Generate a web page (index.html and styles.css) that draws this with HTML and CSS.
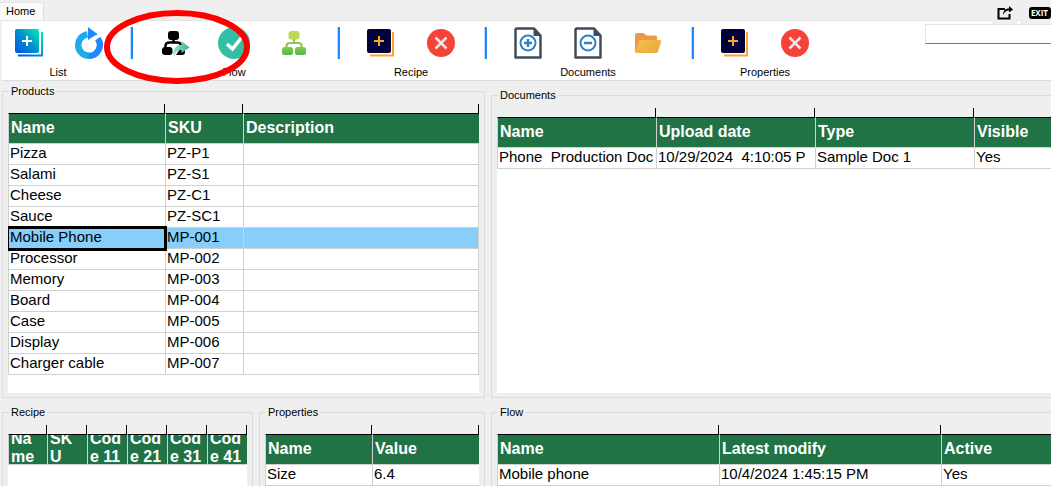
FILE: index.html
```html
<!DOCTYPE html>
<html lang="en">
<head>
<meta charset="utf-8">
<title>Products</title>
<link rel="stylesheet" href="styles.css">
</head>
<body>
<svg class="defs" width="0" height="0" aria-hidden="true">
  <defs>
    <linearGradient id="teal" x1="0" y1="1" x2="1" y2="0"><stop offset="0" stop-color="#0055dc"/><stop offset=".5" stop-color="#008fd0"/><stop offset="1" stop-color="#00f0b4"/></linearGradient>
    <linearGradient id="green" x1="0" y1="0" x2="0" y2="1"><stop offset="0" stop-color="#8cc850"/><stop offset="1" stop-color="#50b748"/></linearGradient>
    <linearGradient id="mint" x1="0" y1="0" x2="1" y2="0"><stop offset="0" stop-color="#8ce8cf"/><stop offset="1" stop-color="#3fae9c"/></linearGradient>
    <linearGradient id="fold" x1="0" y1="0" x2="1" y2="1"><stop offset="0" stop-color="#f0c248"/><stop offset="1" stop-color="#eda63c"/></linearGradient>
    <symbol id="add-dark" viewBox="0 0 32 32">
      <path d="M28 5v23.500H5" fill="none" stroke="#ffa42b" stroke-width="2"/>
      <rect x="2" y="2" width="24" height="24" rx="2" fill="#02023a"/>
      <path d="M14 9v10M9 14h10" stroke="#ffa42b" stroke-width="2"/>
    </symbol>
    <symbol id="cancel" viewBox="0 0 32 32">
      <circle cx="16" cy="16" r="14" fill="#f6433a"/>
      <path d="M10.500 10.500l11 11M21.500 10.500l-11 11" stroke="#f3e6e6" stroke-width="2.500"/>
    </symbol>
    <symbol id="page" viewBox="0 0 32 32">
      <path d="M4.500 1.500H22l6.500 7V30.500H3.500V2.500z" fill="#fff" stroke="#414b59" stroke-width="2.500" stroke-linejoin="round"/>
      <path d="M21.500 1v8H29z" fill="#414b59"/>
      <circle cx="16" cy="16" r="7.500" fill="none" stroke="#2f80c8" stroke-width="2"/>
    </symbol>
  </defs>
</svg>

<header class="strip">
  <button class="tab" type="button">Home</button>
  <div class="window-actions">
    <button class="action" type="button" aria-label="Share">
      <svg width="16" height="14" viewBox="0 0 16 14"><path d="M8 3H1.500v9.500h11V8" fill="none" stroke="#000" stroke-width="2"/><path d="M6 9c0-4 2-6.500 6-6.500V0l4 3.500-4 3V4.500C9 4.500 7.500 6 6 9z"/></svg>
    </button>
    <button class="action action-exit" type="button" aria-label="Exit"><span class="exit">EXIT</span></button>
  </div>
</header>

<div class="toolbar">
  <section class="group group-first">
    <div class="tools">
      <button class="tool" type="button" aria-label="Add product">
        <svg viewBox="0 0 32 32"><path d="M30 5v23.500H6" fill="none" stroke="url(#teal)" stroke-width="2"/><rect x="3" y="2" width="24" height="24" rx="2" fill="url(#teal)"/><path d="M15 9v10M10 14h10" stroke="#fff" stroke-width="2"/></svg>
      </button>
      <button class="tool" type="button" aria-label="Refresh">
        <svg viewBox="0 0 32 32"><path d="M15.500 7.300a10.800 10.800 0 0 0 1.500 21.500" fill="none" stroke="#1fa9ea" stroke-width="6.400"/><path d="M17 28.800a10.800 10.800 0 0 0 8.700-17.200" fill="none" stroke="#1e88ff" stroke-width="6.400"/><path d="M16 0l10 7.500-3 1L16 13z" fill="#1e88ff"/></svg>
      </button>
    </div>
    <span class="group-name">List</span>
  </section>
  <i class="sep"></i>
  <section class="group group-flow">
    <div class="tools">
      <button class="tool" type="button" aria-label="Export flow">
        <svg viewBox="-1 0 32 32"><rect x="9" y="4" width="11" height="9" rx="3"/><path d="M14.500 12v4M6.500 22v-3q0-3.500 4-3.500h8q3 0 3.500 3" fill="none" stroke="#000" stroke-width="2.500"/><rect x="3" y="20" width="10.500" height="8" rx="3"/><path d="M17 28l4-6 5 1v2q0 3-3 3z"/><path d="M14.500 29.500c-1-8 3-11.500 8-11.500v-4l8 6.500-8 5.500v-3c-4 0-6 2-8 6.500z" fill="url(#mint)"/></svg>
      </button>
      <button class="tool" type="button" aria-label="Approve flow">
        <svg viewBox="0 0 32 32"><circle cx="16" cy="16" r="16" fill="#34bea6"/><path d="M9 17l5.500 5L24 10" fill="none" stroke="#fff" stroke-width="3.500"/></svg>
      </button>
      <button class="tool" type="button" aria-label="Flow chart">
        <svg viewBox="0 0 32 32" fill="url(#green)"><rect x="10.500" y="4" width="11" height="8.500" rx="2.500" fill="#bcd858"/><path d="M16 12v4M8.500 21v-2q0-3 3-3h9q3 0 3 3v2" fill="none" stroke="#8cc850" stroke-width="2.200"/><rect x="4" y="20" width="11" height="8" rx="2.500"/><rect x="17" y="20" width="11" height="8" rx="2.500"/></svg>
      </button>
    </div>
    <span class="group-name">Flow</span>
    <svg class="marker" width="148" height="76" viewBox="0 0 148 76" aria-hidden="true"><ellipse cx="74" cy="38" rx="70" ry="34" fill="none" stroke="#f00" stroke-width="6"/></svg>
  </section>
  <i class="sep"></i>
  <section class="group">
    <div class="tools">
      <button class="tool" type="button" aria-label="Add recipe"><svg><use href="#add-dark"/></svg></button>
      <button class="tool" type="button" aria-label="Remove recipe"><svg><use href="#cancel"/></svg></button>
    </div>
    <span class="group-name">Recipe</span>
  </section>
  <i class="sep"></i>
  <section class="group">
    <div class="tools">
      <button class="tool" type="button" aria-label="Add document"><svg viewBox="0 0 32 32"><use href="#page"/><path d="M16 12v8M12 16h8" stroke="#2f80c8" stroke-width="2.500"/></svg></button>
      <button class="tool" type="button" aria-label="Remove document"><svg viewBox="0 0 32 32"><use href="#page"/><path d="M12 16h8" stroke="#2f80c8" stroke-width="2.500"/></svg></button>
      <button class="tool" type="button" aria-label="Open document">
        <svg viewBox="0 0 32 32"><path d="M3 25V8q0-2 2-2h6q2 0 3 2.500h9q2 0 2 2V15L5 26z" fill="#e9994b"/><path d="M8 13h20q1.500 0 1 2l-3 9.500q-.5 1.500-2 1.500H5q-2 0-1.500-2l3-9.500Q7 13 8 13z" fill="url(#fold)"/></svg>
      </button>
    </div>
    <span class="group-name">Documents</span>
  </section>
  <i class="sep"></i>
  <section class="group">
    <div class="tools">
      <button class="tool" type="button" aria-label="Add property"><svg><use href="#add-dark"/></svg></button>
      <button class="tool" type="button" aria-label="Remove property"><svg><use href="#cancel"/></svg></button>
    </div>
    <span class="group-name">Properties</span>
  </section>
  <input class="search" type="text" aria-label="Search">
</div>

<main class="panels">
  <fieldset class="panel">
    <legend>Products</legend>
    <div class="sheet sheet-products">
      <table class="closed">
        <colgroup><col class="w157"><col class="w78"><col></colgroup>
        <thead>
          <tr class="ticks" aria-hidden="true"><td></td><td></td><td></td></tr>
          <tr><th>Name</th><th>SKU</th><th>Description</th></tr>
        </thead>
        <tbody>
          <tr><td>Pizza</td><td>PZ-P1</td><td></td></tr>
          <tr><td>Salami</td><td>PZ-S1</td><td></td></tr>
          <tr><td>Cheese</td><td>PZ-C1</td><td></td></tr>
          <tr><td>Sauce</td><td>PZ-SC1</td><td></td></tr>
          <tr class="selected"><td class="current">Mobile Phone</td><td>MP-001</td><td></td></tr>
          <tr><td>Processor</td><td>MP-002</td><td></td></tr>
          <tr><td>Memory</td><td>MP-003</td><td></td></tr>
          <tr><td>Board</td><td>MP-004</td><td></td></tr>
          <tr><td>Case</td><td>MP-005</td><td></td></tr>
          <tr><td>Display</td><td>MP-006</td><td></td></tr>
          <tr><td>Charger cable</td><td>MP-007</td><td></td></tr>
        </tbody>
      </table>
    </div>
  </fieldset>

  <fieldset class="panel panel-open panel-documents">
    <legend>Documents</legend>
    <div class="sheet">
      <table>
        <colgroup><col class="w159"><col class="w159"><col class="w159"><col></colgroup>
        <thead>
          <tr class="ticks" aria-hidden="true"><td></td><td></td><td></td><td class="last"></td></tr>
          <tr><th>Name</th><th>Upload date</th><th>Type</th><th>Visible</th></tr>
        </thead>
        <tbody>
          <tr><td>Phone  Production Doc</td><td>10/29/2024  4:10:05 P</td><td>Sample Doc 1</td><td>Yes</td></tr>
        </tbody>
      </table>
    </div>
  </fieldset>

  <div class="pair">
    <fieldset class="panel panel-cut">
      <legend>Recipe</legend>
      <div class="sheet">
        <table class="narrow">
          <colgroup><col class="w39"><col class="w40"><col class="w40"><col class="w40"><col class="w40"><col></colgroup>
          <thead>
            <tr class="ticks" aria-hidden="true"><td></td><td></td><td></td><td></td><td></td><td></td></tr>
            <tr><th><div class="wrap">Name</div></th><th><div class="wrap">SKU</div></th><th><div class="wrap">Code 11</div></th><th><div class="wrap">Code 21</div></th><th><div class="wrap">Code 31</div></th><th><div class="wrap">Code 41</div></th></tr>
          </thead>
        </table>
      </div>
    </fieldset>
    <fieldset class="panel panel-cut">
      <legend>Properties</legend>
      <div class="sheet">
        <table>
          <colgroup><col class="w107"><col></colgroup>
          <thead>
            <tr class="ticks" aria-hidden="true"><td></td><td></td></tr>
            <tr><th>Name</th><th>Value</th></tr>
          </thead>
          <tbody><tr><td>Size</td><td>6.4</td></tr></tbody>
        </table>
      </div>
    </fieldset>
  </div>

  <fieldset class="panel panel-open panel-cut">
    <legend>Flow</legend>
    <div class="sheet">
      <table>
        <colgroup><col class="w222"><col class="w222"><col></colgroup>
        <thead>
          <tr class="ticks" aria-hidden="true"><td></td><td></td><td class="last"></td></tr>
          <tr><th>Name</th><th>Latest modify</th><th>Active</th></tr>
        </thead>
        <tbody><tr><td>Mobile phone</td><td>10/4/2024 1:45:15 PM</td><td>Yes</td></tr></tbody>
      </table>
    </div>
  </fieldset>
</main>
</body>
</html>
```

FILE: styles.css
```css
* { box-sizing: border-box; }

body {
  margin: 0;
  min-height: 100vh;
  display: flex;
  flex-direction: column;
  background: #efefef;
  color: #000;
  font: 11px/14px "Liberation Sans", Arial, sans-serif;
}

.defs { position: absolute; }

button {
  margin: 0;
  padding: 0;
  border: 0;
  background: none;
  color: inherit;
  font: inherit;
}

/* Tab strip */
.strip {
  position: relative;
  z-index: 1;
  display: flex;
  justify-content: space-between;
  height: 20px;
  padding-top: 2px;
}
.tab {
  padding: 0 8px 2px 6px;
  background: #fafafa;
  border-right: 1px solid #dcdcdc;
  border-top: 1px solid #e4e4e4;
}
.window-actions { display: flex; gap: 3px; }
.action {
  display: flex;
  align-items: center;
  justify-content: center;
  width: 25px;
  height: 22px;
  background: #efefef;
}
.action-exit { width: 31px; justify-content: flex-end; }
.exit {
  padding: 0 3px 0 2px;
  border-radius: 3px;
  background: #000;
  color: #fff;
  font: bold 8px/12px "Open Sans", sans-serif;
}

/* Toolbar */
.toolbar {
  display: flex;
  height: 61px;
  margin-left: 2px;
  background: #fff;
  border-top: 1px solid #e4e4e4;
  border-bottom: 1px solid #dcdcdc;
}
.group {
  display: flex;
  flex-direction: column;
  align-items: center;
  gap: 6px;
  padding: 6px 15px 0 13px;
}
.group-first { padding: 6px 14px 0 10px; }
.group-flow { position: relative; }
.tools { display: flex; gap: 28px; }
.tool { width: 32px; height: 32px; }
.tool svg { display: block; width: 32px; height: 32px; }
.sep {
  width: 3px;
  height: 32px;
  margin: 6px 12px 0;
  background: #1e88ff;
  border-left: 1px solid #b9d9fb;
}
.marker { position: absolute; left: -42px; top: -12px; pointer-events: none; }
.search {
  width: 126px;
  height: 20px;
  margin: 3px 0 0 auto;
  border: 1px solid #e2e2e2;
  border-right: 0;
  border-bottom-color: #7a7a7a;
  background: #fff;
}

/* Panels */
.panels {
  flex: 1;
  display: grid;
  grid-template-columns: minmax(0, 483fr) minmax(0, 560fr);
  grid-template-rows: auto 1fr;
  gap: 7px 6px;
  padding: 3px 0 0 2px;
}
.pair {
  display: grid;
  grid-template-columns: minmax(0, 251fr) minmax(0, 226fr);
  gap: 6px;
}
.panel {
  display: flex;
  flex-direction: column;
  min-width: 0;
  margin: 0;
  padding: 6px 5px 4px;
  border: 1px solid #dcdcdc;
}
.panel-documents { margin-top: 4px; }
.panel-open { border-right: 0; padding-right: 0; }
.panel-cut { border-bottom: 0; padding-bottom: 0; }
legend { margin-left: 1px; padding: 0 2px; }
.sheet { flex: 1; overflow: hidden; background: #fff; }
.sheet-products { padding-bottom: 18px; }

/* Tables */
table {
  width: 100%;
  table-layout: fixed;
  border-spacing: 0;
  font: 15px/18px "Liberation Sans", Arial, sans-serif;
}
.w39 { width: 39px; }
.w40 { width: 40px; }
.w78 { width: 78px; }
.w107 { width: 107px; }
.w157 { width: 157px; }
.w159 { width: 159px; }
.w222 { width: 222px; }

td, th {
  overflow: hidden;
  border-left: 1px solid #d0d0d0;
  border-bottom: 1px solid #d0d0d0;
  text-align: left;
  white-space: pre;
}
td { height: 21px; padding: 0 1px 2px; }
th {
  height: 30px;
  padding: 0 2px 2px;
  background: #217346;
  color: #fff;
  font-size: 16px;
  font-weight: bold;
}
.ticks td {
  height: 10px;
  padding: 0;
  background: #efefef;
  border-color: #efefef #000 #000 #efefef;
  border-right: 1px solid #000;
}
.ticks .last { border-right: 0; }
.closed tbody td:last-child { border-right: 1px solid #d0d0d0; }
.selected td { background: #87cefa; }
.selected .current {
  position: relative;
  outline: 3px solid #000;
  outline-offset: -1px;
}
.narrow th { padding: 0 4px 0 2px; }
.wrap {
  display: flex;
  align-items: flex-end;
  height: 31px;
  margin-bottom: -2px;
  overflow: hidden;
  line-height: 18px;
  white-space: normal;
  word-break: break-all;
}
```
